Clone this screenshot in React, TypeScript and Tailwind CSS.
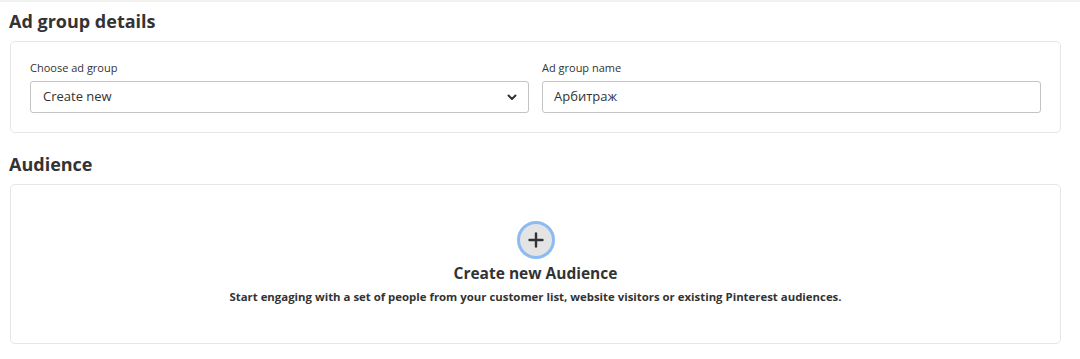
import React from "react";

export default function App() {
  return (
    <div
      className="w-[1080px] h-[359px] bg-white text-[#333333] overflow-hidden"
      style={{ fontFamily: '"Open Sans", "Noto Sans", "Liberation Sans", sans-serif' }}
    >
      <div className="h-[2px] bg-[#f1f1f1]" />
      <div className="pl-[9px] pr-[19px]">
        <h2 className="mt-[8px] text-[18px] leading-[22px] font-bold text-[#333]">Ad group details</h2>
        <div className="mt-[9px] ml-[1px] h-[92px] rounded-[5px] border border-[#e6e6e6] px-[19px] pt-[18px]">
          <div className="flex gap-[13px]">
            <div className="flex-1">
              <div className="text-[11px] leading-[16px] text-[#333]">Choose ad group</div>
              <div className="mt-[5px] h-[32px] rounded-[3px] border border-[#c4c4c4] flex items-center justify-between pl-[12px] pr-[10px]">
                <span className="text-[13px] text-[#333]">Create new</span>
                <svg width="12" height="12" viewBox="0 0 24 24" fill="none" stroke="#333" strokeWidth="4" strokeLinecap="round" strokeLinejoin="round">
                  <path d="M5 9l7 7 7-7" />
                </svg>
              </div>
            </div>
            <div className="flex-1">
              <div className="text-[11px] leading-[16px] text-[#333]">Ad group name</div>
              <div className="mt-[5px] h-[32px] rounded-[3px] border border-[#c4c4c4] flex items-center pl-[11px]">
                <span className="text-[13px] text-[#333]">Арбитраж</span>
              </div>
            </div>
          </div>
        </div>
        <h2 className="mt-[20px] text-[18px] leading-[22px] font-bold text-[#333]">Audience</h2>
        <div className="mt-[9px] ml-[1px] h-[160px] rounded-[5px] border border-[#e6e6e6] flex flex-col items-center pt-[36px]">
          <div className="w-[38px] h-[38px] rounded-full border-[3px] border-[#8cbaf2] bg-[#e4e4e4] flex items-center justify-center">
            <svg width="16" height="16" viewBox="0 0 16 16" stroke="#333" strokeWidth="2.4" strokeLinecap="round">
              <path d="M8 1.5v13M1.5 8h13" />
            </svg>
          </div>
          <div className="mt-[4px] text-[15.5px] leading-[20px] font-bold text-[#333]">Create new Audience</div>
          <div className="mt-[6px] text-[11.4px] leading-[16px] font-bold text-[#333]">
            Start engaging with a set of people from your customer list, website visitors or existing Pinterest audiences.
          </div>
        </div>
      </div>
    </div>
  );
}
